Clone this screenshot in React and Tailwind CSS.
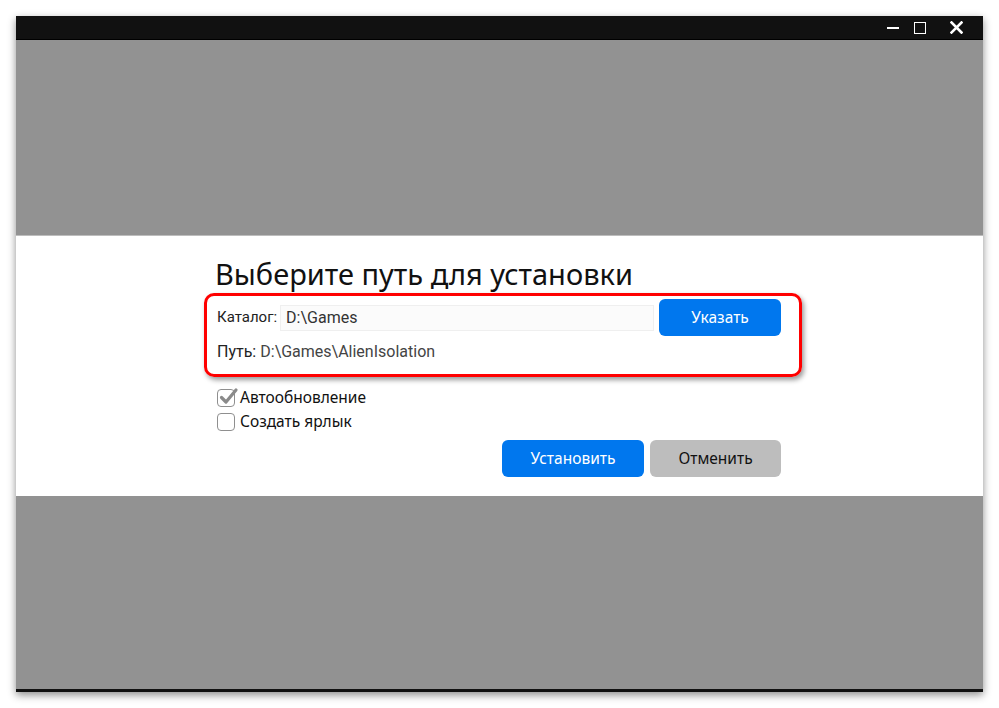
import React from "react";

function TitleBar() {
  return (
    <div className="h-[24px] bg-[#111111] border-b border-black flex items-center justify-end pr-[20px] shrink-0">
      <div className="w-[12px] h-[2px] bg-white mr-[15px]" />
      <div className="w-[12px] h-[12px] border-[1.5px] border-white mr-[24px]" />
      <svg width="13" height="13" viewBox="0 0 13 13">
        <path d="M1.5 1.5 L11.5 11.5 M11.5 1.5 L1.5 11.5" stroke="white" strokeWidth="2.6" strokeLinecap="square" />
      </svg>
    </div>
  );
}

function Checkbox({ checked }) {
  return (
    <div className="relative w-[18px] h-[18px] rounded-[4px] border border-[#8f8f8f] bg-white">
      {checked && (
        <svg className="absolute -top-[3px] left-[1px]" width="20" height="20" viewBox="0 0 20 20">
          <path d="M2.5 10.5 L7 15 L17 3" fill="none" stroke="#8a8a8a" strokeWidth="3.2" strokeLinecap="round" strokeLinejoin="round" />
        </svg>
      )}
    </div>
  );
}

export default function App() {
  const noto = { fontFamily: '"Noto Sans", "Open Sans", sans-serif' };
  const roboto = { fontFamily: 'Roboto, "Noto Sans", sans-serif' };
  return (
    <div className="w-[999px] h-[708px] bg-white p-4">
      <div className="w-full h-full flex flex-col bg-[#929292] shadow-[0_3px_8px_rgba(0,0,0,0.45)]">
        <TitleBar />
        <div className="h-[195px] shrink-0" />
        <div className="h-[261px] shrink-0 bg-white border-t border-[#bdbdbd] flex justify-center">
          <div className="w-[564px] -ml-[1px] flex flex-col pt-[18px]">
            <h1 className="text-[29px] leading-[39px] text-[#111] -ml-[2px]" style={noto}>
              Выберите путь для установки
            </h1>
            <div className="-ml-[13px] w-[598px] border-[3px] border-[#ff0000] rounded-[10px] shadow-[2px_3px_5px_rgba(0,0,0,0.4)] pl-[10px] pr-[18px] pt-[3px] pb-[8px]">
              <div className="flex items-center h-[37px]">
                <span className="text-[15px] text-[#222]" style={roboto}>Каталог:</span>
                <div className="ml-[3px] flex-1 h-[26px] bg-[#fbfbfb] border border-[#efefef] flex items-center pl-[5px] text-[16px] text-[#333]" style={roboto}>
                  D:\Games
                </div>
                <button className="ml-[5px] w-[122px] h-[37px] rounded-[6px] bg-[#0077ee] text-white text-[15.5px]" style={noto}>
                  Указать
                </button>
              </div>
              <div className="h-[30px] flex items-center pt-[2px] text-[16px]" style={roboto}>
                <span className="text-[#222]">Путь:</span>
                <span className="ml-[4px] text-[#444]">D:\Games\AlienIsolation</span>
              </div>
            </div>
            <div className="mt-[9px] flex flex-col text-[15.5px] text-[#111]" style={noto}>
              <label className="h-[24px] flex items-center gap-[5px]">
                <Checkbox checked />
                <span>Автообновление</span>
              </label>
              <label className="h-[24px] flex items-center gap-[5px]">
                <Checkbox />
                <span>Создать ярлык</span>
              </label>
            </div>
            <div className="mt-[6px] flex justify-end gap-[6px]" style={noto}>
              <button className="w-[142px] h-[37px] rounded-[6px] bg-[#0077ee] text-white text-[15.5px]">
                Установить
              </button>
              <button className="w-[131px] h-[37px] rounded-[6px] bg-[#bdbdbd] text-[#111] text-[15.5px]">
                Отменить
              </button>
            </div>
          </div>
        </div>
        <div className="flex-1" />
        <div className="h-[3px] bg-[#111] shrink-0" />
      </div>
    </div>
  );
}
